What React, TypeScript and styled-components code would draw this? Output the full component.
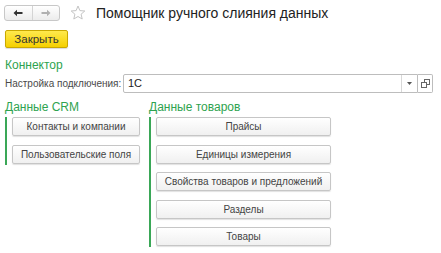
import React from "react";
import styled, { createGlobalStyle } from "styled-components";

const GlobalStyle = createGlobalStyle`
    html, body {
        margin: 0;
        padding: 0;
        background: #ffffff;
    }
    body {
        font-family: "Liberation Sans", Arial, sans-serif;
        color: #333333;
    }
`;

const Page = styled.div`
    width: 441px;
    height: 253px;
    padding: 4px 5px 0 5px;
    box-sizing: border-box;
    overflow: hidden;
`;

const Header = styled.div`
    display: flex;
    align-items: center;
    height: 17px;
`;

const NavGroup = styled.div`
    display: flex;
    margin-left: -1px;
    width: 56px;
    height: 16px;
    border: 1px solid #c8c8c8;
    border-radius: 3px;
    box-sizing: border-box;
    background: linear-gradient(#ffffff, #ececec);
    overflow: hidden;
`;

const NavButton = styled.div<{ $divider?: boolean }>`
    flex: 1;
    display: flex;
    align-items: center;
    justify-content: center;
    border-left: ${ props => props.$divider ? "1px solid #d4d4d4" : "none" };
`;

const Star = styled.svg`
    margin-left: 10px;
    flex: none;
`;

const Title = styled.h1`
    margin: 0 0 0 10px;
    font-size: 14px;
    font-weight: normal;
    color: #222222;
    white-space: nowrap;
`;

const CloseButton = styled.button`
    display: block;
    margin-top: 9px;
    width: 63px;
    height: 18px;
    padding: 0;
    border: 1px solid #c9a800;
    border-radius: 2px;
    background: linear-gradient(#ffe94d, #f5d000);
    font-family: inherit;
    font-size: 11.5px;
    color: #333333;
    box-shadow: 0 1px 1px rgba(0, 0, 0, 0.15);
`;

const Heading = styled.div`
    font-size: 12px;
    color: #2ea34f;
    line-height: 16px;
`;

const SectionHeading = styled(Heading)`
    margin-top: 9px;
`;

const FieldRow = styled.div`
    display: flex;
    align-items: center;
    margin-top: 1px;
    height: 19px;
`;

const FieldLabel = styled.label`
    width: 118px;
    flex: none;
    font-size: 10px;
    color: #4a4a4a;
    white-space: nowrap;
`;

const Select = styled.div`
    display: flex;
    align-items: stretch;
    width: 295px;
    height: 19px;
    border: 1px solid #bdbdbd;
    border-radius: 2px 0 0 2px;
    box-sizing: border-box;
    background: #ffffff;
`;

const SelectValue = styled.div`
    flex: 1;
    padding-left: 4px;
    font-size: 11px;
    line-height: 17px;
    color: #222222;
`;

const SelectArrow = styled.div`
    width: 15px;
    border-left: 1px solid #d8d8d8;
    display: flex;
    align-items: center;
    justify-content: center;
`;

const OpenButton = styled.div`
    width: 15px;
    height: 19px;
    border: 1px solid #bdbdbd;
    border-left: none;
    border-radius: 0 2px 2px 0;
    box-sizing: border-box;
    display: flex;
    align-items: center;
    justify-content: center;
`;

const Columns = styled.div`
    display: flex;
    margin-top: 6px;
`;

const Column = styled.div<{ $width: number }>`
    width: ${ props => props.$width }px;
    flex: none;
`;

const Group = styled.div`
    margin-top: 2px;
    border-left: 2px solid #3aa757;
    padding: 0 0 1px 5px;
    display: flex;
    flex-direction: column;
    gap: 8.5px;
`;

const ActionButton = styled.button<{ $width: number }>`
    width: ${ props => props.$width }px;
    height: 19px;
    padding: 0;
    border: 1px solid #c6c6c6;
    border-radius: 2px;
    background: linear-gradient(#ffffff, #f0f0f0);
    box-shadow: 0 1px 1px rgba(0, 0, 0, 0.12);
    font-family: inherit;
    font-size: 10px;
    color: #444444;
    white-space: nowrap;
`;

const crmItems = [ "Контакты и компании", "Пользовательские поля" ];
const productItems = [ "Прайсы", "Единицы измерения", "Свойства товаров и предложений", "Разделы", "Товары" ];

const App = (): JSX.Element =>
    <Page>
        <GlobalStyle />
        <Header>
            <NavGroup>
                <NavButton>
                    <svg width="10" height="8" viewBox="0 0 10 8">
                        <path d="M0.5 4 L4 0.8 L4 3 L9.5 3 L9.5 5 L4 5 L4 7.2 Z" fill="#333333" />
                    </svg>
                </NavButton>
                <NavButton $divider>
                    <svg width="10" height="8" viewBox="0 0 10 8">
                        <path d="M9.5 4 L6 0.8 L6 3 L0.5 3 L0.5 5 L6 5 L6 7.2 Z" fill="#b0b0b0" />
                    </svg>
                </NavButton>
            </NavGroup>
            <Star width="16" height="16" viewBox="0 0 16 16">
                <path d="M8 1 L9.9 5.6 L14.8 6 L11.1 9.2 L12.2 14 L8 11.5 L3.8 14 L4.9 9.2 L1.2 6 L6.1 5.6 Z" fill="none" stroke="#c4c4c4" strokeWidth="1" strokeLinejoin="round" />
            </Star>
            <Title>Помощник ручного слияния данных</Title>
        </Header>
        <CloseButton>Закрыть</CloseButton>
        <SectionHeading>Коннектор</SectionHeading>
        <FieldRow>
            <FieldLabel>Настройка подключения:</FieldLabel>
            <Select>
                <SelectValue>1С</SelectValue>
                <SelectArrow>
                    <svg width="5" height="3" viewBox="0 0 5 3">
                        <path d="M0 0 L5 0 L2.5 3 Z" fill="#555555" />
                    </svg>
                </SelectArrow>
            </Select>
            <OpenButton>
                <svg width="9" height="9" viewBox="0 0 9 9">
                    <rect x="3.5" y="0.5" width="5" height="5" fill="none" stroke="#666666" />
                    <rect x="0.5" y="3.5" width="5" height="5" fill="#ffffff" stroke="#666666" />
                </svg>
            </OpenButton>
        </FieldRow>
        <Columns>
            <Column $width={144}>
                <Heading>Данные CRM</Heading>
                <Group>
                    { crmItems.map( item => <ActionButton key={item} $width={128}>{item}</ActionButton> ) }
                </Group>
            </Column>
            <Column $width={190}>
                <Heading>Данные товаров</Heading>
                <Group>
                    { productItems.map( item => <ActionButton key={item} $width={175}>{item}</ActionButton> ) }
                </Group>
            </Column>
        </Columns>
    </Page>

export default App;
